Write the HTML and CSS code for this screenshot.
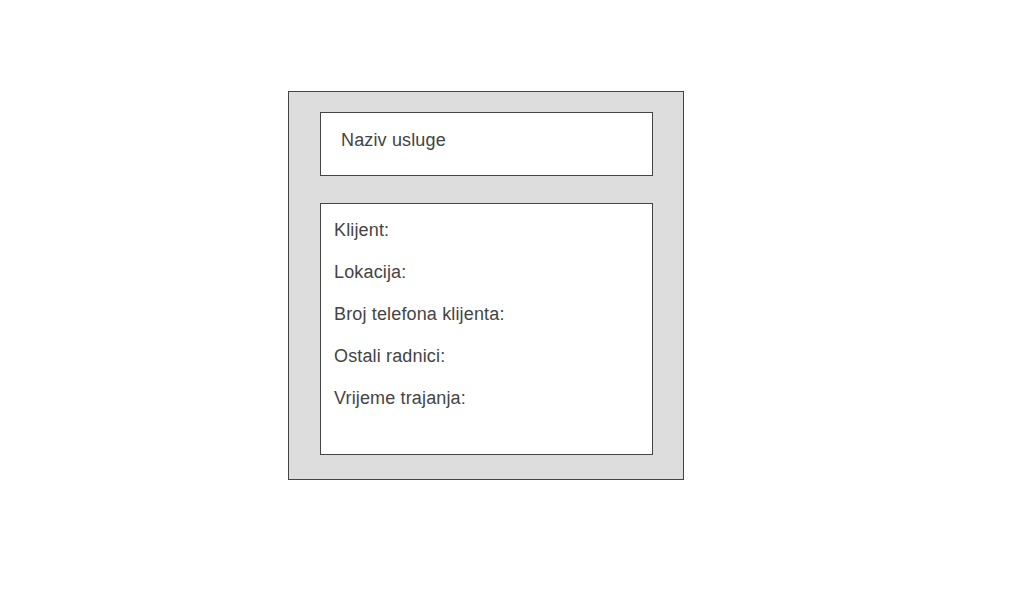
FILE: index.html
```html
<!DOCTYPE html>
<html>
<head>
<meta charset="utf-8">
<link rel="stylesheet" href="styles.css">
</head>
<body>
<div class="card">
  <div class="title-box">Naziv usluge</div>
  <div class="details">
    <div class="row">Klijent:</div>
    <div class="row">Lokacija:</div>
    <div class="row">Broj telefona klijenta:</div>
    <div class="row">Ostali radnici:</div>
    <div class="row">Vrijeme trajanja:</div>
  </div>
</div>
</body>
</html>
```
FILE: styles.css
```css
html, body {
  margin: 0;
  padding: 0;
  background: #fff;
}
body {
  font-family: "Liberation Sans", Arial, sans-serif;
  font-size: 18px;
  letter-spacing: 0.15px;
  color: #444;
  padding: 91px 0 0 288px;
}
.card {
  box-sizing: border-box;
  width: 396px;
  height: 389px;
  background: #ddd;
  border: 1px solid #444;
  padding: 20px 30px 0 31px;
  display: flex;
  flex-direction: column;
  gap: 27px;
}
.title-box {
  box-sizing: border-box;
  height: 64px;
  background: #fff;
  border: 1px solid #444;
  padding: 17px 20px 15px;
  line-height: 20px;
}
.details {
  box-sizing: border-box;
  height: 252px;
  background: #fff;
  border: 1px solid #444;
  padding: 5px 13px;
}
.row {
  line-height: 42px;
  height: 42px;
}
```
